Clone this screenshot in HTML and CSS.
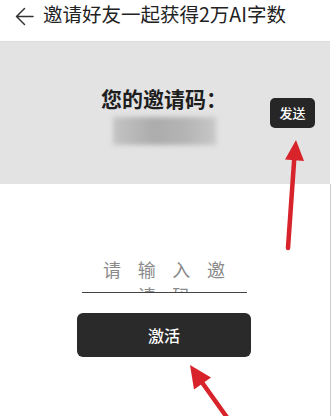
FILE: index.html
```html
<!DOCTYPE html>
<html lang="zh-CN">
<head>
<meta charset="utf-8">
<title>邀请好友</title>
<link rel="stylesheet" href="styles.css">
</head>
<body>
<div class="page">
  <header class="topbar">
    <svg class="back" width="20" height="20" viewBox="0 0 20 20" aria-hidden="true">
      <path d="M18 10.5 H1.5 M9.5 2.5 L1.5 10.5 L9.5 18.5" fill="none" stroke="#333" stroke-width="1.5" stroke-linecap="round" stroke-linejoin="round"/>
    </svg>
    <h1 class="title">邀请好友一起获得2万AI字数</h1>
  </header>

  <section class="band">
    <div class="code-col">
      <div class="code-label">您的邀请码：</div>
      <div class="code-blur"></div>
    </div>
    <button class="send-btn">发送</button>
  </section>

  <section class="activate">
    <div class="code-input">请输入邀请码</div>
    <button class="activate-btn">激活</button>
  </section>

  <svg class="arrows" width="333" height="416" viewBox="0 0 333 416" aria-hidden="true">
    <line x1="288" y1="248" x2="294.3" y2="158" stroke="#d8232a" stroke-width="4.5" stroke-linecap="round"/>
    <polygon points="296,140 304,161 285,159.5" fill="#d8232a"/>
    <line x1="236" y1="430" x2="201" y2="381" stroke="#d8232a" stroke-width="4.5" stroke-linecap="round"/>
    <polygon points="190,365 211,377.5 194,389.5" fill="#d8232a"/>
  </svg>
</div>
</body>
</html>
```
FILE: styles.css
```css
* { box-sizing: border-box; }
html, body {
  margin: 0;
  padding: 0;
  background: #ffffff;
}
body {
  font-family: "Noto Sans CJK SC", "Noto Sans", sans-serif;
  color: #222;
}
.page {
  position: relative;
  width: 333px;
  height: 416px;
  overflow: hidden;
}
.topbar {
  height: 41px;
  display: flex;
  align-items: flex-start;
  padding-left: 15px;
  padding-top: 1px;
}
.back {
  margin-top: 5px;
  flex: none;
}
.title {
  margin: 0 0 0 8px;
  font-size: 19.5px;
  font-weight: 400;
  line-height: 26px;
  color: #222;
  white-space: nowrap;
}
.band {
  width: 330px;
  height: 143px;
  background: #e3e3e3;
  border-top: 1px solid #dcdcdc;
  display: flex;
  align-items: flex-start;
  padding: 0 15px 0 58px;
}
.code-col {
  flex: 1;
  display: flex;
  flex-direction: column;
  align-items: center;
  padding-top: 43px;
}
.code-label {
  font-size: 21px;
  font-weight: 700;
  line-height: 26px;
  color: #1e1e1e;
}
.code-blur {
  margin-top: 6px;
  width: 103px;
  height: 28px;
  background: linear-gradient(90deg, #c4c4c4 0%, #acacac 40%, #b4b4b4 70%, #c8c8c8 100%);
  filter: blur(2.5px);
}
.send-btn {
  margin-top: 56px;
  width: 45px;
  height: 30px;
  border: none;
  border-radius: 5px;
  background: #262626;
  color: #fff;
  font-family: inherit;
  font-size: 13px;
  font-weight: 500;
  padding: 0;
  line-height: 30px;
}
.activate {
  width: 331px;
  height: 232px;
  border-right: 1px solid #cfcfcf;
  display: flex;
  flex-direction: column;
  align-items: center;
  padding-right: 2px;
}
.code-input {
  margin-top: 72px;
  width: 165px;
  height: 37px;
  overflow: hidden;
  border-bottom: 1px solid #444;
  font-size: 18px;
  line-height: 26px;
  letter-spacing: 16.7px;
  padding-left: 16.7px;
  text-align: center;
  color: #8a8a8a;
}
.activate-btn {
  margin-top: 20px;
  width: 174px;
  height: 44px;
  border: none;
  border-radius: 6px;
  background: #2a2a2a;
  color: #fff;
  font-family: inherit;
  font-size: 16px;
  font-weight: 500;
  padding: 0;
}
.arrows {
  position: absolute;
  left: 0;
  top: 0;
  pointer-events: none;
}
```
